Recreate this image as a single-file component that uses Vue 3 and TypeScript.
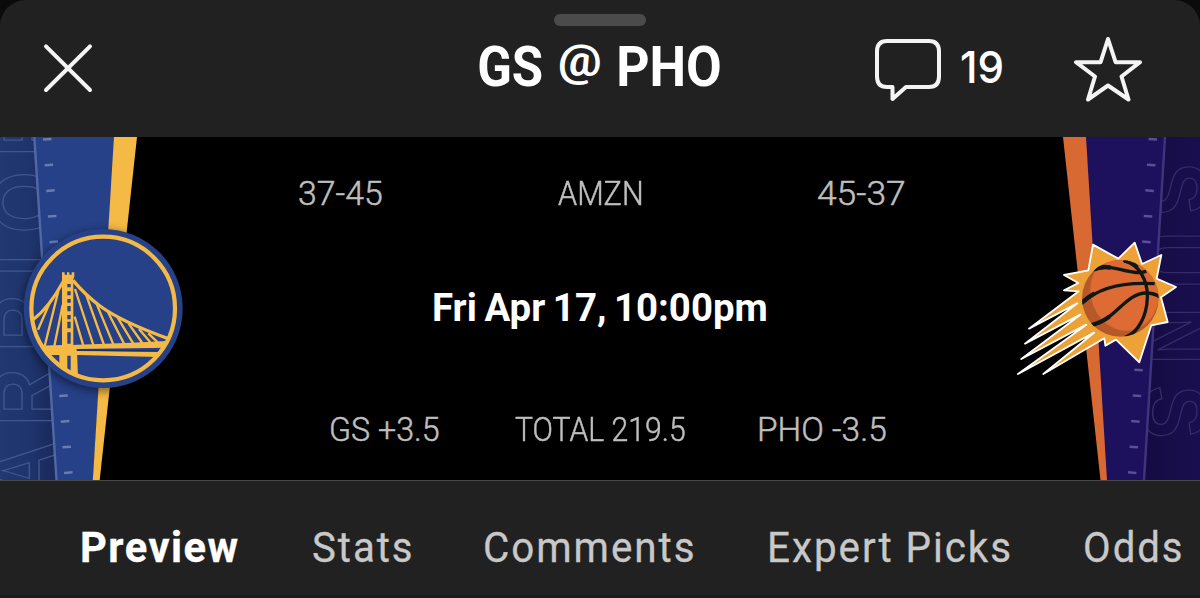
<script setup lang="ts">
interface Label {
  text: string
  width: number
}

const records: Label[] = [
  { text: '37-45', width: 83 },
  { text: 'AMZN', width: 83 },
  { text: '45-37', width: 87 },
]
const odds: Label[] = [
  { text: 'GS +3.5', width: 108 },
  { text: 'TOTAL 219.5', width: 170 },
  { text: 'PHO -3.5', width: 126 },
]
const tabs: Label[] = [
  { text: 'Preview', width: 156 },
  { text: 'Stats', width: 98 },
  { text: 'Comments', width: 208 },
  { text: 'Expert Picks', width: 239.5 },
  { text: 'Odds', width: 96 },
]

const leftTicks = Array.from({ length: 14 }, (_, i) => ({ x: 43 + i * 1.62, y: 139.3 + i * 25.64 }))
const rightTicks = Array.from({ length: 14 }, (_, i) => ({ x: 1148.5 - i * 1.58, y: 139.3 + i * 25.64 }))

/* Condenses a label horizontally so that its ink fills the given width. */
const vFit = {
  mounted(el: HTMLElement, binding: { value: number }) {
    const style = getComputedStyle(el)
    const ctx = document.createElement('canvas').getContext('2d')
    if (!ctx) return
    ctx.font = `${style.fontWeight} ${style.fontSize} ${style.fontFamily}`
    ctx.letterSpacing = style.letterSpacing === 'normal' ? '0px' : style.letterSpacing
    ctx.wordSpacing = style.wordSpacing
    const m = ctx.measureText((el.textContent ?? '').trim())
    const spacing = parseFloat(ctx.letterSpacing) || 0
    const left = -m.actualBoundingBoxLeft
    const right = Math.min(m.actualBoundingBoxRight, m.width - spacing)
    const scale = binding.value / (right - left)
    el.style.transform = `translateX(${-left * scale}px) scaleX(${scale})`
    const box = el.parentElement
    if (box) box.style.width = `${binding.value}px`
  },
}
</script>

<template>
  <main class="sheet">
    <header class="header">
      <div class="grabber"></div>
      <div class="bar">
        <svg class="close" viewBox="0 0 52 52">
          <path d="M4 4.300L48 48M48 4.300L4 48" />
        </svg>
        <h1 class="title">
          <div class="fitbox"><span v-fit="62.5" class="fit">GS</span></div>
          <div class="fitbox at"><span v-fit="41.5" class="fit">@</span></div>
          <div class="fitbox"><span v-fit="101" class="fit">PHO</span></div>
        </h1>
        <div class="actions">
          <svg class="comment" viewBox="0 0 70 64">
            <path d="M13 3H55Q65 3 65 13.500V38.500Q65 49 55 49H32L18.500 61V49H13Q3 49 3 38.500V13.500Q3 3 13 3Z" />
          </svg>
          <div class="count fitbox"><span v-fit="40.5" class="fit">19</span></div>
          <svg class="star" viewBox="0 0 70 66">
            <path d="M35 3L42.600 26.200H67L48.500 40.500L55.500 63.500L35 49.500L15 63.500L22 40.500L3 26.200H27.600Z" />
          </svg>
        </div>
      </div>
    </header>

    <section class="hero">
      <svg class="art" viewBox="0 137 200 343">
        <defs>
          <linearGradient id="gsBack" x1="0" x2="1" y1="0" y2="0">
            <stop offset="0" stop-color="#203970" />
            <stop offset=".5" stop-color="#1e346c" />
            <stop offset="1" stop-color="#182856" />
          </linearGradient>
          <filter id="gsShadow" x="-20%" y="-20%" width="140%" height="140%">
            <feGaussianBlur stdDeviation="5" />
          </filter>
          <clipPath id="gsClip"><path d="M0 137H34L56.500 480H0Z" /></clipPath>
          <clipPath id="gsPanelClip"><path d="M0 137H137L99.700 480H0Z" /></clipPath>
          <clipPath id="gsRing"><circle cx="103.200" cy="308.500" r="72" /></clipPath>
        </defs>
        <path d="M0 137H60V480H0Z" fill="url(#gsBack)" />
        <g clip-path="url(#gsClip)">
          <text class="wordmark gs" transform="rotate(-90) scale(.9 1)" x="-555 -473.300 -391 -307.300 -259.500 -174.500" y="55">ARRIOR</text>
        </g>
        <path d="M34 137H115L93 480H56.500Z" fill="#264188" />
        <path d="M114 137H137L99.700 480H92.800Z" fill="#f5ba45" />
        <path d="M34.300 137L56.500 480" stroke="#5068a5" stroke-width="2.400" />
        <path
          v-for="(t, i) in leftTicks"
          :key="i"
          :d="`M${t.x} ${t.y + 0.300}l8.500 -.600`"
          stroke="#6a7bb0"
          stroke-width="2.500"
        />
        <circle cx="103" cy="311" r="80" fill="#000" opacity=".5" filter="url(#gsShadow)" clip-path="url(#gsPanelClip)" />
        <circle cx="103.200" cy="308.500" r="79.500" fill="#264188" />
        <g clip-path="url(#gsRing)">
          <g transform="translate(25 255) scale(.33333)" fill="#f5ba45">
            <path d="M111 52H119V59H126V52H133V59H140V52H148V66L145 72V285H156L159 370H137V302H127V354L103 344V300H50L36 273L111 271V72Z" />
            <path
              d="M127 87h10v10h-10zM127 109h10v12h-10zM127 132h10v11h-10zM127 153h10v16h-10zM127 180h10v13h-10zM127 200h10v20h-10zM127 232h10v34h-10z"
              fill="#264188"
            />
            <path d="M35 273L140 270L320 263L440 257L426 278L155 282V288L412 290L400 306L155 300H50Z" />
            <path d="M155 285.500L408 288" stroke="#192e6c" stroke-width="4" />
            <g fill="none" stroke="#f5ba45">
              <path d="M144 76Q180 119 225 153Q290 201 438 254" stroke-width="10" />
              <path d="M115 79Q71 160 22 196" stroke-width="9" />
              <path
                d="M149 185L175 272M150 102L205 270M183 118L237 270M213 142L265 268M246 166L298 268M278 188L325 266M311 206L352 264M342 222L376 262M370 235L398 262M77 137L39 224M100 108L59 274M113 150L88 274"
                stroke-width="7"
              />
            </g>
          </g>
        </g>
        <circle cx="103.200" cy="308.500" r="71.800" fill="none" stroke="#f5ba45" stroke-width="4.200" />
      </svg>

      <div class="info">
        <div class="row records">
          <div v-for="r in records" :key="r.text" class="fitbox"><span v-fit="r.width" class="fit">{{ r.text }}</span></div>
        </div>
        <div class="when fitbox"><span v-fit="332.5" class="fit">Fri Apr 17, 10:00pm</span></div>
        <div class="row odds">
          <div v-for="o in odds" :key="o.text" class="fitbox"><span v-fit="o.width" class="fit">{{ o.text }}</span></div>
        </div>
      </div>

      <svg class="art" viewBox="1000 137 200 343">
        <defs>
          <linearGradient id="phoBack" x1="0" x2="1" y1="0" y2="0">
            <stop offset="0" stop-color="#150b40" />
            <stop offset="1" stop-color="#190f50" />
          </linearGradient>
          <clipPath id="phoClip"><path d="M1165 137H1200V480H1144Z" /></clipPath>
          <clipPath id="phoBall"><circle cx="319" cy="181" r="115" /></clipPath>
        </defs>
        <path d="M1140 137H1200V480H1140Z" fill="url(#phoBack)" />
        <g clip-path="url(#phoClip)">
          <text class="wordmark pho" transform="rotate(90) scale(.9 1)" x="180 257 341 428" y="-1144">SUNS</text>
        </g>
        <path d="M1085 137H1165L1144 480H1106Z" fill="#1d105c" />
        <path d="M1063 137H1086L1107 480H1100.500Z" fill="#d96932" />
        <path d="M1165 137L1144 480" stroke="#41347c" stroke-width="2.400" />
        <path
          v-for="(t, i) in rightTicks"
          :key="i"
          :d="`M${t.x} ${t.y - 0.300}l8.500 .600`"
          stroke="#5a4f91"
          stroke-width="2.500"
        />
        <g transform="translate(1014 238) scale(.33333)">
          <path
            d="M237 20L313 62L362 14L384 78L442 51L428 122L486 147L441 178L461 252L412 262L376 373L306 305L274 323L271 301L88 408L240 284L12 408L217 260L22 363L199 230L33 317L190 196L45 272L194 160L150 157L193 135L150 111L223 97Z"
            fill="#eda238"
            stroke="#fff"
            stroke-width="5.500"
            stroke-linejoin="round"
          />
          <circle cx="319" cy="181" r="115" fill="#b65828" />
          <g clip-path="url(#phoBall)">
            <ellipse cx="332" cy="162" rx="102" ry="117" transform="rotate(-12 332 162)" fill="#de6b34" />
            <g fill="none" stroke="#101816" stroke-width="10">
              <path d="M238 96C292 70 345 116 397 100" />
              <path d="M328 67C377 78 402 130 400 180C398 235 372 285 333 298" />
              <path d="M200 198C258 142 340 132 422 137" />
              <path d="M229 262C302 251 333 165 397 165Q420 165 437 177" />
              <path d="M240 94Q262 83 290 89M229 262Q264 253 287 235M331 68Q352 71 370 89M203 195Q220 178 242 166" stroke-width="13" />
            </g>
          </g>
        </g>
      </svg>
    </section>

    <nav class="tabs">
      <a v-for="(t, i) in tabs" :key="t.text" class="tab fitbox" :class="{ active: i === 0 }"><span v-fit="t.width" class="fit">{{ t.text }}</span></a>
    </nav>
  </main>
</template>

<style>
html,
body {
  background: #0b0b0b;
  overflow: hidden;
}
</style>

<style scoped>
.sheet {
  display: flex;
  flex-direction: column;
  width: 1200px;
  height: 598px;
  overflow: hidden;
  box-sizing: border-box;
  border-radius: 26px 26px 0 0;
  background: #212121;
  color: #fff;
  font-family: Roboto, "Liberation Sans", sans-serif;
}
.fitbox {
  display: block;
  flex: none;
  white-space: nowrap;
}
.fit {
  display: inline-block;
  transform-origin: 0 50%;
}
.header {
  flex: none;
  height: 137px;
}
.grabber {
  width: 92px;
  height: 12px;
  margin: 14px auto 0;
  border-radius: 6px;
  background: #4b4b4b;
}
.bar {
  display: grid;
  grid-template-columns: 437px 1fr auto;
  align-items: start;
  padding: 0 57px 0 42px;
}
.close {
  width: 52px;
  height: 52px;
  margin-top: 16px;
}
.close path,
.comment path,
.star path {
  fill: none;
  stroke: #f4f4f4;
  stroke-width: 4;
  stroke-linecap: round;
  stroke-linejoin: round;
}
.title {
  display: flex;
  align-items: flex-start;
  justify-content: flex-start;
  gap: 18px;
  margin: 9px 0 0;
  font-size: 55px;
  line-height: 64px;
  font-weight: 700;
}
.at {
  margin-left: -1px;
  margin-right: 1px;
  font-size: 43.5px;
  line-height: 54px;
}
.actions {
  display: flex;
  align-items: flex-start;
}
.comment {
  width: 70px;
  height: 64px;
  margin: 12px 18px 0 0;
}
.count {
  margin: 16px 70.500px 0 0;
  font-family: Inter, sans-serif;
  font-size: 44px;
  line-height: 50px;
  font-weight: 450;
}
.star {
  width: 70px;
  height: 66px;
  margin-top: 10px;
}
.hero {
  display: flex;
  flex: none;
  height: 343px;
  background: #000;
}
.art {
  flex: none;
  width: 200px;
  height: 343px;
}
.wordmark {
  fill: none;
  stroke-width: 1.4;
  font-family: "Liberation Sans", sans-serif;
  font-weight: 700;
  font-size: 89px;
}
.gs {
  stroke: #415690;
}
.pho {
  stroke: #352a6a;
}
.info {
  flex: 1;
  display: flex;
  flex-direction: column;
}
.row {
  display: flex;
  color: #bfbfbf;
  font-size: 33.7px;
  line-height: 40px;
  font-weight: 300;
  -webkit-text-stroke: 0.5px #bfbfbf;
}
.records {
  justify-content: space-between;
  padding: 37px 95.500px 0 99px;
}
.when {
  margin: 70px 0 0 234px;
  font-size: 38.5px;
  line-height: 48px;
  font-weight: 700;
  word-spacing: -2px;
}
.odds {
  justify-content: space-between;
  margin-top: 78px;
  padding: 0 114px 0 131px;
}
.tabs {
  display: flex;
  flex: 1;
  gap: 74.5px;
  box-sizing: border-box;
  border-top: 1px solid #484848;
  border-bottom: 3px solid #1c1c1c;
  padding: 42px 0 0 82px;
  font-size: 41.8px;
  line-height: 50px;
}
.tab {
  color: #c8c8c8;
  letter-spacing: 2px;
  -webkit-text-stroke: 0.3px currentColor;
}
.tab:nth-child(4) {
  margin-left: 2.5px;
}
.tab:nth-child(5) {
  margin-left: 1px;
}
.tab.active {
  color: #fff;
  font-weight: 700;
  letter-spacing: 1.5px;
}
</style>
